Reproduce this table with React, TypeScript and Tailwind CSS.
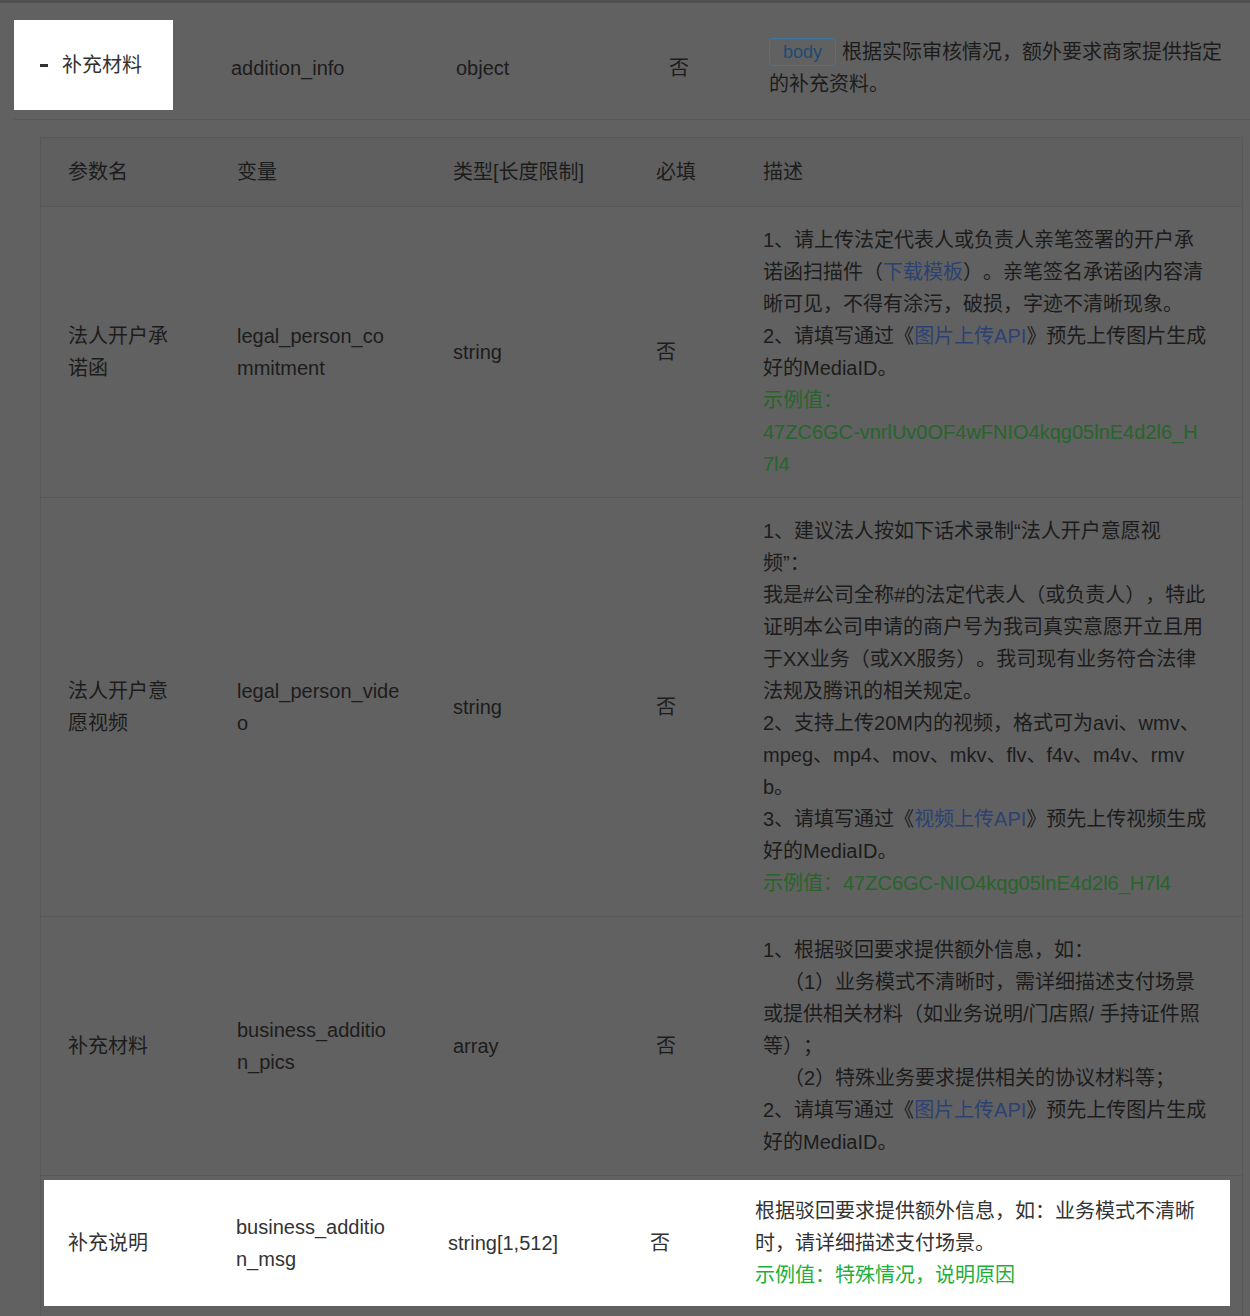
import type { ReactNode } from "react";

const Link = ({ children }: { children: ReactNode }) => (
  <span className="text-[#2c4272]">{children}</span>
);

const Green = ({ children }: { children: ReactNode }) => (
  <span className="text-[#27652b]">{children}</span>
);

type Row = {
  name: string;
  variable: string[];
  type: string;
  required: string;
  desc: ReactNode[];
};

const rows: Row[] = [
  {
    name: "法人开户承诺函",
    variable: ["legal_person_co", "mmitment"],
    type: "string",
    required: "否",
    desc: [
      "1、请上传法定代表人或负责人亲笔签署的开户承",
      <>诺函扫描件（<Link>下载模板</Link>）。亲笔签名承诺函内容清</>,
      "晰可见，不得有涂污，破损，字迹不清晰现象。",
      <>2、请填写通过《<Link>图片上传API</Link>》预先上传图片生成</>,
      "好的MediaID。",
      <Green>示例值：</Green>,
      <Green>47ZC6GC-vnrlUv0OF4wFNIO4kqg05lnE4d2l6_H</Green>,
      <Green>7l4</Green>,
    ],
  },
  {
    name: "法人开户意愿视频",
    variable: ["legal_person_vide", "o"],
    type: "string",
    required: "否",
    desc: [
      "1、建议法人按如下话术录制“法人开户意愿视",
      "频”：",
      "我是#公司全称#的法定代表人（或负责人），特此",
      "证明本公司申请的商户号为我司真实意愿开立且用",
      "于XX业务（或XX服务）。我司现有业务符合法律",
      "法规及腾讯的相关规定。",
      "2、支持上传20M内的视频，格式可为avi、wmv、",
      "mpeg、mp4、mov、mkv、flv、f4v、m4v、rmv",
      "b。",
      <>3、请填写通过《<Link>视频上传API</Link>》预先上传视频生成</>,
      "好的MediaID。",
      <Green>示例值：47ZC6GC-NIO4kqg05lnE4d2l6_H7l4</Green>,
    ],
  },
  {
    name: "补充材料",
    variable: ["business_additio", "n_pics"],
    type: "array",
    required: "否",
    desc: [
      "1、根据驳回要求提供额外信息，如：",
      <span className="pl-[21px]">（1）业务模式不清晰时，需详细描述支付场景</span>,
      "或提供相关材料（如业务说明/门店照/ 手持证件照",
      "等）；",
      <span className="pl-[21px]">（2）特殊业务要求提供相关的协议材料等；</span>,
      <>2、请填写通过《<Link>图片上传API</Link>》预先上传图片生成</>,
      "好的MediaID。",
    ],
  },
];

function Lines({ lines }: { lines: ReactNode[] }) {
  return (
    <div>
      {lines.map((line, i) => (
        <div key={i} className="whitespace-nowrap">
          {line}
        </div>
      ))}
    </div>
  );
}

export default function App() {
  return (
    <div className="min-h-screen overflow-hidden bg-[#616161] font-['Liberation_Sans','Noto_Sans_CJK_SC',sans-serif] text-[20px] leading-[32px] text-[#1c1c1c] [text-spacing-trim:space-all]">
      <div className="h-[3px] bg-[#4f4f4f]" />

      {/* parent row */}
      <div className="ml-[14px] flex h-[117px] items-center border-b border-[#585858] pt-[14px]">
        <div className="w-[189px]">
          <div className="mb-[6px] flex h-[90px] w-[159px] items-center bg-white pl-[26px] text-[#333]">
            <span className="mr-[14px] inline-block h-[3px] w-[8px] bg-[#333]" />
            补充材料
          </div>
        </div>
        <div className="w-[225px] pl-[28px]">addition_info</div>
        <div className="w-[213px] pl-[28px]">object</div>
        <div className="w-[100px] pl-[28px]">否</div>
        <div className="flex-1 pl-[28px]">
          <div className="flex items-center whitespace-nowrap">
            <span className="mr-[6px] flex h-[28px] items-center rounded-[4px] border border-[#3d77a0] px-[13px] text-[18px] leading-none text-[#1d4c72]">
              body
            </span>
            根据实际审核情况，额外要求商家提供指定
          </div>
          <div className="whitespace-nowrap">的补充资料。</div>
        </div>
      </div>

      {/* nested table */}
      <div className="mt-[17px] ml-[40px] w-[1203px] border border-b-0 border-[#585858]">
        <div className="flex h-[69px] items-center border-b border-[#585858] bg-[#5f5f5f]">
          <div className="w-[168px] pl-[27px]">参数名</div>
          <div className="w-[216px] pl-[28px]">变量</div>
          <div className="w-[203px] pl-[28px]">类型[长度限制]</div>
          <div className="w-[107px] pl-[28px]">必填</div>
          <div className="flex-1 pl-[28px]">描述</div>
        </div>

        {rows.map((row) => (
          <div key={row.name} className="flex items-center border-b border-[#585858]">
            <div className="w-[168px] pl-[27px] pr-[28px]">{row.name}</div>
            <div className="w-[216px] pl-[28px]">
              <Lines lines={row.variable} />
            </div>
            <div className="w-[203px] pl-[28px]">{row.type}</div>
            <div className="w-[107px] pl-[28px]">{row.required}</div>
            <div className="flex-1 py-[17px] pl-[28px]">
              <Lines lines={row.desc} />
            </div>
          </div>
        ))}

        {/* highlighted row */}
        <div className="pt-[4px] pr-[12px] pb-[20px] pl-[3px]">
          <div className="flex h-[126px] items-center bg-white text-[#333]">
            <div className="w-[192px] pl-[24px]">补充说明</div>
            <div className="w-[212px]">
              <Lines lines={["business_additio", "n_msg"]} />
            </div>
            <div className="w-[202px]">string[1,512]</div>
            <div className="w-[105px]">否</div>
            <div className="flex-1">
              <Lines
                lines={[
                  "根据驳回要求提供额外信息，如：业务模式不清晰",
                  "时，请详细描述支付场景。",
                  <span className="text-[#1eae3c]">示例值：特殊情况，说明原因</span>,
                ]}
              />
            </div>
          </div>
        </div>
      </div>
    </div>
  );
}
